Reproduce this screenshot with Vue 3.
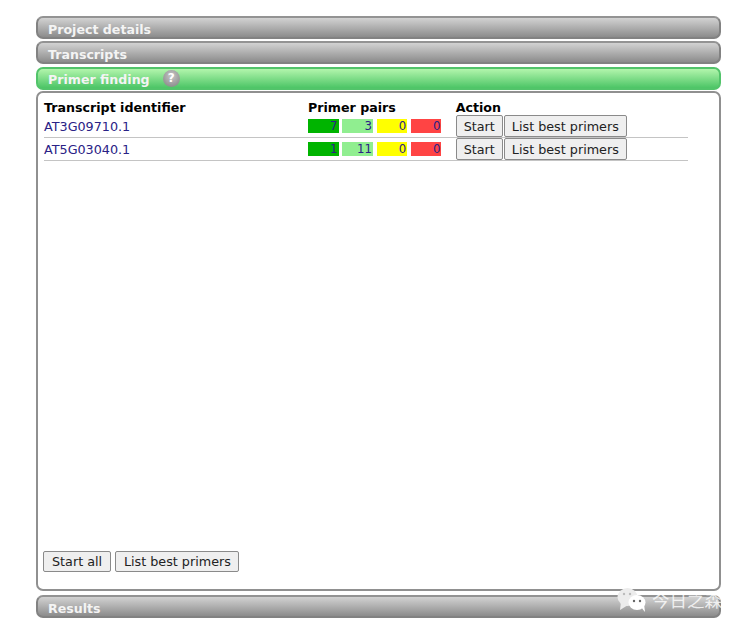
<script setup>
const rows = [
  { id: 'AT3G09710.1', counts: [7, 3, 0, 0] },
  { id: 'AT5G03040.1', counts: [1, 11, 0, 0] },
]
const tones = ['green', 'light', 'yellow', 'red']
</script>

<template>
  <div class="page">
    <div class="bar">Project details</div>
    <div class="bar second">Transcripts</div>
    <div class="bar active">
      <span>Primer finding</span>
      <span class="help">?</span>
    </div>
    <section class="panel">
      <div class="grid head">
        <div>Transcript identifier</div>
        <div>Primer pairs</div>
        <div>Action</div>
      </div>
      <div v-for="row in rows" :key="row.id" class="grid row">
        <a class="link">{{ row.id }}</a>
        <div class="counts">
          <span v-for="(c, i) in row.counts" :key="i" class="count" :class="tones[i]">{{ c }}</span>
        </div>
        <div class="actions">
          <button class="btn">Start</button>
          <button class="btn">List best primers</button>
        </div>
      </div>
      <div class="footer">
        <button class="btn big">Start all</button>
        <button class="btn big">List best primers</button>
      </div>
    </section>
    <div class="bar results">Results</div>
    <div class="watermark">
      <svg width="30" height="26" viewBox="0 0 30 26">
        <ellipse cx="10.5" cy="10" rx="10" ry="9" fill="#ececec" />
        <path d="M4 15 L3 23 L11 18 Z" fill="#ececec" />
        <ellipse cx="20" cy="15.5" rx="8.5" ry="7.5" fill="#fff" />
        <path d="M24 20 L28 25 L27 17 Z" fill="#fff" />
        <circle cx="7" cy="7" r="1.2" fill="#bbb" />
        <circle cx="13" cy="7" r="1.2" fill="#bbb" />
        <circle cx="17" cy="14" r="1.2" fill="#666" />
        <circle cx="23" cy="14" r="1.2" fill="#666" />
      </svg>
      <span>今日之森</span>
    </div>
  </div>
</template>

<style>
html, body { margin: 0; background: #fff; }
</style>

<style scoped>
.page {
  position: relative;
  width: 740px;
  height: 626px;
  box-sizing: border-box;
  padding: 16px 19.5px 0 36px;
  overflow: hidden;
  font-family: "DejaVu Sans", sans-serif;
  font-size: 12.75px;
  color: #000;
}
.bar {
  box-sizing: border-box;
  height: 23px;
  margin-bottom: 2px;
  padding: 3px 0 0 10px;
  border: 2px solid #828282;
  border-top-color: #939393;
  border-radius: 7px;
  background: linear-gradient(#d2d2d2, #8c8c8c);
  color: #f4f4f4;
  font-weight: 700;
  font-size: 12.6px;
  display: flex;
  align-items: center;
}
.second { margin-bottom: 3px; }
.active {
  margin-bottom: 1px;
  padding-top: 2px;
  border-color: #52c46a;
  background: linear-gradient(#b2f5ac, #4cc566);
}
.help {
  width: 17px;
  height: 17px;
  margin: -2px 0 0 13px;
  border-radius: 50%;
  background: radial-gradient(circle at 50% 35%, #c8c8c8, #7e7e7e);
  color: #fff;
  font-size: 12px;
  line-height: 17px;
  text-align: center;
}
.panel {
  box-sizing: border-box;
  height: 500px;
  margin-bottom: 4px;
  padding: 8px 6px 0;
  border: 2px solid #909090;
  border-radius: 7px;
  background: #fff;
  display: flex;
  flex-direction: column;
}
.grid {
  width: 644px;
  display: grid;
  grid-template-columns: 264px 147.7px 1fr;
}
.head {
  font-weight: 700;
  font-size: 12.65px;
  line-height: 14px;
  height: 14px;
}
.row {
  box-sizing: border-box;
  height: 23px;
  border-bottom: 1px solid #c4c4c4;
  align-items: center;
}
.link { color: #2a2286; }
.counts { display: flex; gap: 3.7px; }
.count {
  box-sizing: border-box;
  width: 30.6px;
  height: 14.5px;
  padding-right: 1px;
  color: #2a2286;
  font-size: 11.75px;
  line-height: 14.5px;
  text-align: right;
}
.green { background: #00b400; }
.light { background: #90ee90; }
.yellow { background: #ffff00; }
.red { background: #ff4444; }
.actions { display: flex; gap: 1px; margin-top: -1px; }
.btn {
  box-sizing: border-box;
  height: 22px;
  padding: 1px 7px 0;
  border: 1px solid #8a8a8a;
  border-radius: 2px;
  background: #efefef;
  color: #222;
  font-family: inherit;
  font-size: 12.75px;
}
.footer {
  margin: auto 0 17px -0.6px;
  display: flex;
  gap: 4.6px;
}
.big { height: 21px; padding: 0 7.6px; }
.results { margin: 0; }
.watermark {
  position: absolute;
  left: 617px;
  top: 587px;
  display: flex;
  align-items: center;
  gap: 5px;
  color: rgba(255, 255, 255, 0.8);
  font-family: "Noto Sans CJK SC", sans-serif;
  font-size: 17.5px;
  line-height: 26px;
  white-space: nowrap;
}
</style>
